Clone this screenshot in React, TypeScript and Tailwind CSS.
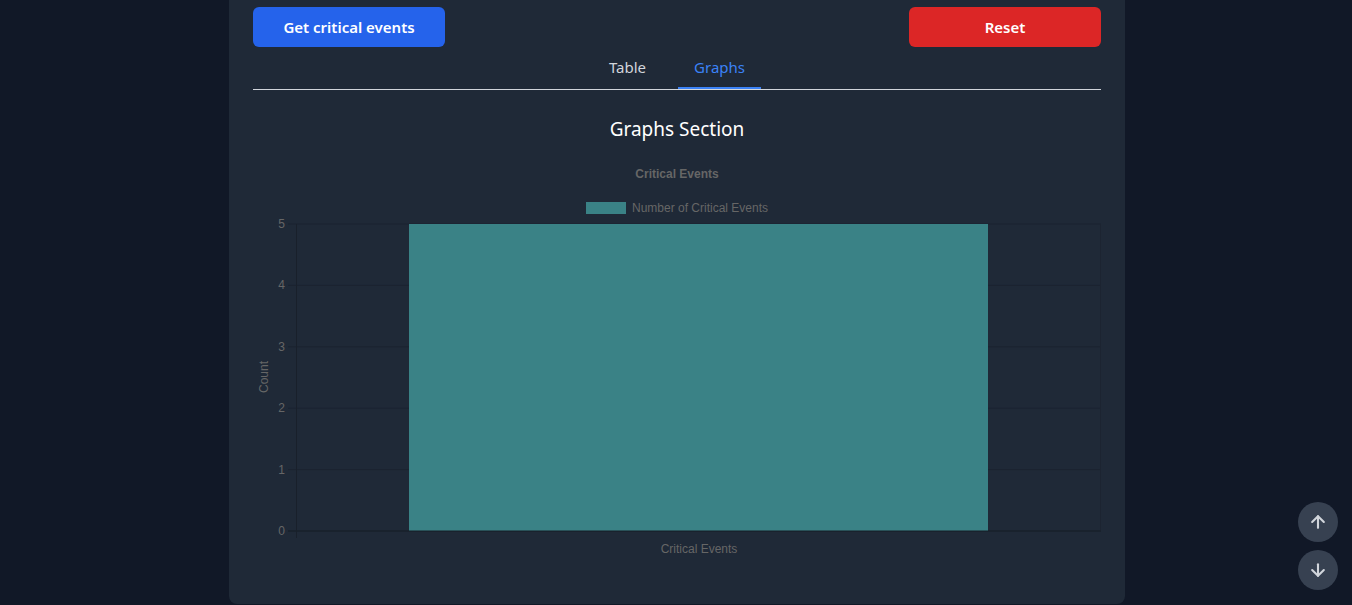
import { ArrowDown, ArrowUp } from "lucide-react";

const ticks = [5, 4, 3, 2, 1, 0];
const TOP = 74;
const BOTTOM = 381;
const step = (BOTTOM - TOP) / 5;

const CriticalChart = () => (
  <svg width="848" height="420" viewBox="0 0 848 420" className="block mt-[7px]" style={{ fontFamily: '"Liberation Sans", Arial, sans-serif' }}>
    <text x="424" y="28" textAnchor="middle" fontSize="12" fontWeight="bold" fill="#666666">
      Critical Events
    </text>

    {/* legend */}
    <rect x="333" y="52" width="40" height="12" fill="#3a8286" />
    <text x="379" y="62" fontSize="12" fill="#666666">
      Number of Critical Events
    </text>

    {/* y grid + labels */}
    {ticks.map((t, i) => {
      const y = TOP + i * step;
      return (
        <g key={t}>
          <line x1="35" x2="848" y1={y} y2={y} stroke={t === 0 ? "#19202b" : "#1b2330"} strokeWidth="1" />
          <text x="32" y={y + 4} textAnchor="end" fontSize="12" fill="#666666">
            {t}
          </text>
        </g>
      );
    })}

    {/* bar */}
    <rect x="156" y={TOP} width="579" height={BOTTOM - TOP} fill="#3a8286" />

    {/* axes */}
    <line x1="43.5" x2="43.5" y1={TOP} y2={BOTTOM + 7} stroke="#19202b" strokeWidth="1" />
    <line x1="847.5" x2="847.5" y1={TOP} y2={BOTTOM} stroke="#1c2431" strokeWidth="1" />
    <line x1="35" x2="848" y1={BOTTOM} y2={BOTTOM} stroke="#19202b" strokeWidth="1" />

    <text x="15" y="227" textAnchor="middle" fontSize="12" fill="#666666" transform="rotate(-90 15 227)">
      Count
    </text>
    <text x="446" y="403" textAnchor="middle" fontSize="12" fill="#666666">
      Critical Events
    </text>
  </svg>
);

const App = () => {
  return (
    <div className="min-h-screen bg-[#111827] flex justify-center pl-[2px]" style={{ fontFamily: '"Noto Sans", "Open Sans", sans-serif' }}>
      <div className="w-[896px] bg-[#1f2937] rounded-b-lg px-6 pt-[7px] pb-[34px] h-fit">
        <div className="flex justify-between">
          <button className="w-48 h-10 rounded-md bg-[#2563eb] text-white font-semibold text-[15px]">
            Get critical events
          </button>
          <button className="w-48 h-10 rounded-md bg-[#dc2626] text-white font-semibold text-[15px]">
            Reset
          </button>
        </div>

        <div className="flex justify-center gap-4 border-b border-[#d1d5db]">
          <button className="px-4 py-2 text-[15px] leading-6 text-[#d1d5db] border-b-2 border-transparent">Table</button>
          <button className="px-4 py-2 text-[15px] leading-6 text-[#3b82f6] border-b-2 border-[#3b82f6]">Graphs</button>
        </div>

        <h2 className="mt-[25px] text-[19px] leading-7 text-white text-center">Graphs Section</h2>

        <CriticalChart />
      </div>

      <div className="fixed right-[14px] bottom-[15px] flex flex-col gap-2">
        <button className="w-10 h-10 rounded-full bg-[#374151] text-[#d1d5db] flex items-center justify-center">
          <ArrowUp size={20} strokeWidth={2.5} />
        </button>
        <button className="w-10 h-10 rounded-full bg-[#374151] text-[#d1d5db] flex items-center justify-center">
          <ArrowDown size={20} strokeWidth={2.5} />
        </button>
      </div>
    </div>
  );
};

export default App;
